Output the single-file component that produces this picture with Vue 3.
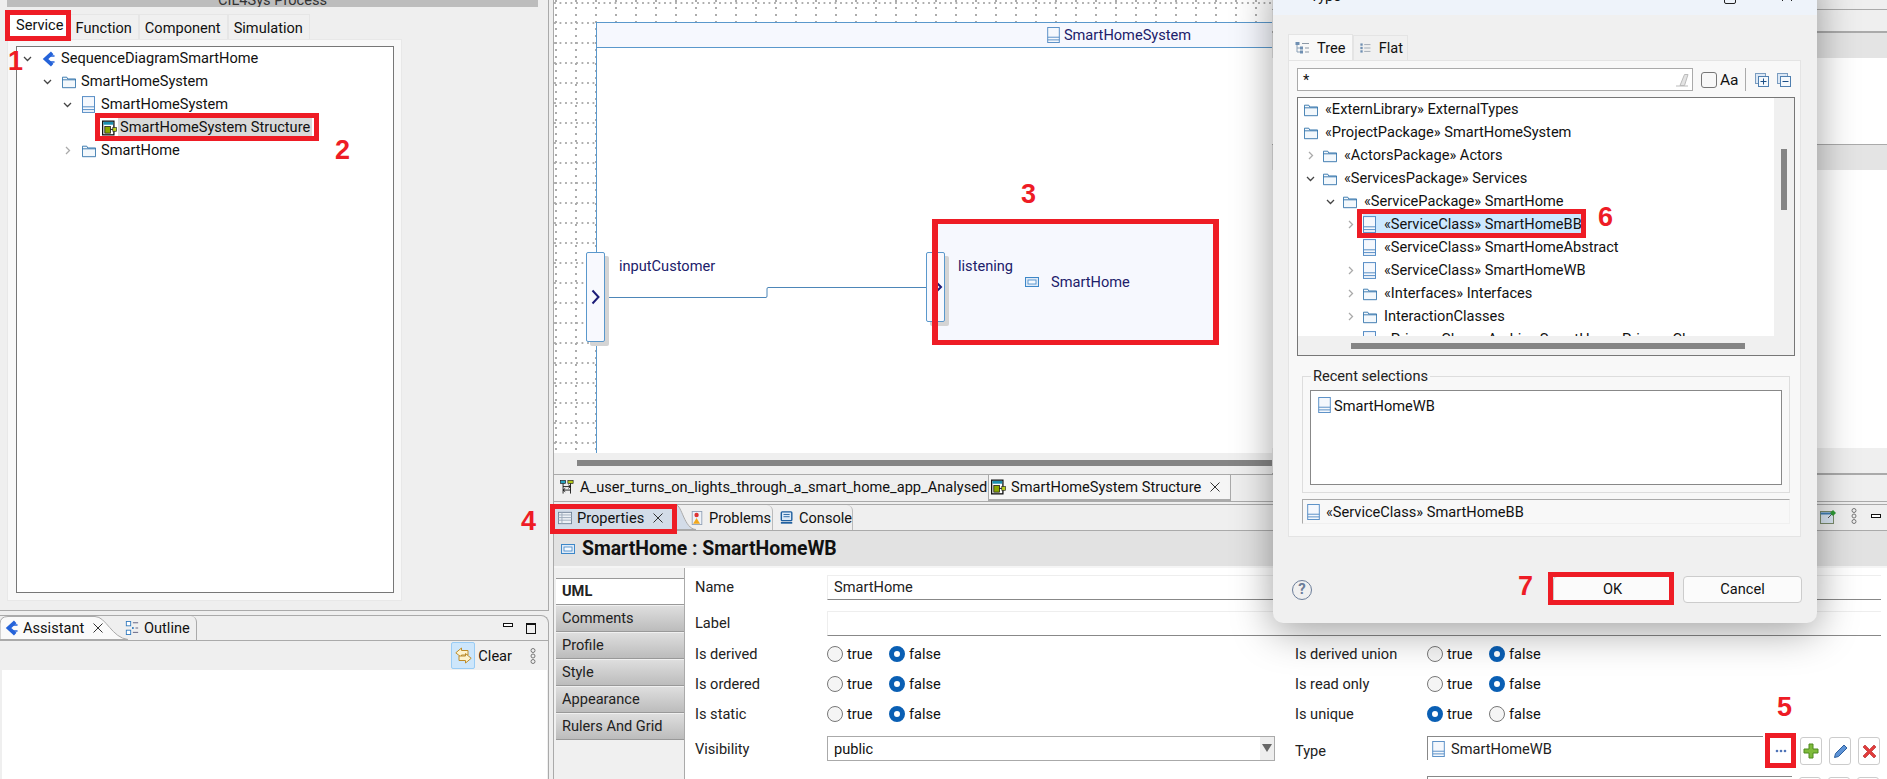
<template>
  <div class="app">
    <svg class="defs" width="0" height="0">
      <symbol id="ic-folder" viewBox="0 0 16 14">
        <path d="M.5 1.5h5l1 2h9v10H.5z" fill="#f3f8fc" stroke="#2b6fa8" />
        <path d="M.5 4.5h15" stroke="#2b6fa8" fill="none" />
      </symbol>
      <symbol id="ic-class" viewBox="0 0 14 18">
        <rect x=".5" y=".5" width="13" height="17" fill="#f5f8fd" stroke="#4c86c2" />
        <path d="M.5 11.5h13M.5 14.5h13" stroke="#4c86c2" fill="none" />
      </symbol>
      <symbol id="ic-struct" viewBox="0 0 16 16">
        <rect x=".7" y=".7" width="12" height="14.6" fill="#fff" stroke="#111" stroke-width="1.4" />
        <rect x="1.5" y="1.5" width="10.5" height="3" fill="#1c8fb0" />
        <rect x="3" y="6.5" width="6" height="7" fill="#8aa800" stroke="#111" stroke-width=".8" />
        <path d="M9 9.5h3" stroke="#111" />
        <rect x="11.5" y="7.5" width="4" height="4" fill="#b9cf1c" stroke="#222" stroke-width=".7" />
      </symbol>
      <symbol id="ic-seq" viewBox="0 0 14 16">
        <path d="M11 1.5L3.800 8l7.200 6.500" fill="none" stroke="#2563d9" stroke-width="4" />
        <path d="M8.500 4.800h5M8.500 11.200h5" stroke="#2563d9" stroke-width="1.6" />
      </symbol>
      <symbol id="ic-part" viewBox="0 0 14 10">
        <rect x=".5" y=".5" width="13" height="9" fill="#dfeaf7" stroke="#3d87c8" />
        <rect x="3" y="3" width="8" height="4" fill="#f6f9fe" stroke="#3d87c8" stroke-width=".8" />
      </symbol>
      <symbol id="ic-seqdiag" viewBox="0 0 16 16">
        <rect x=".5" y=".5" width="6" height="3.5" fill="#28a3c0" stroke="#111" stroke-width=".7" />
        <rect x="9" y=".5" width="6" height="3.5" fill="#b6cc1b" stroke="#111" stroke-width=".7" />
        <path d="M3.500 4v11.500M12 4v11.500M3.500 7.500H12M12 11.500H3.500M9.500 5.500L12 7.500 9.500 9.500M6 9.500l-2.500 2L6 13.500" fill="none" stroke="#111" stroke-width="1" />
      </symbol>
      <symbol id="ic-props" viewBox="0 0 16 16">
        <rect x=".5" y="1.5" width="15" height="13" fill="#edf1f6" stroke="#6d7f94" />
        <path d="M.5 4.500h15M.5 7.500h15M.5 10.500h15M4.500 1.500v13" stroke="#9aa8b8" fill="none" />
      </symbol>
      <symbol id="ic-problems" viewBox="0 0 16 16">
        <rect x="2.5" y=".5" width="11" height="15" fill="#eef2f8" stroke="#8f9fb5" />
        <circle cx="7.500" cy="4.500" r="2.500" fill="#d33" />
        <path d="M7.500 8L3.500 14.500h8z" fill="#f2a81d" />
      </symbol>
      <symbol id="ic-console" viewBox="0 0 16 16">
        <rect x="1.5" y="1" width="12" height="10" rx="1" fill="#dbe9f7" stroke="#1f5f9f" stroke-width="1.6" />
        <path d="M4 4h7M4 6.500h7" stroke="#1f5f9f" />
        <path d="M1 13.500h13" stroke="#1f5f9f" stroke-width="2" />
      </symbol>
      <symbol id="ic-outline" viewBox="0 0 14 16">
        <rect x=".5" y=".5" width="5" height="5" fill="#fff" stroke="#2f78bd" />
        <rect x=".5" y="10.5" width="5" height="5" fill="#fff" stroke="#2f78bd" />
        <rect x="7" y="7" width="2" height="2" fill="#2f78bd" />
        <path d="M8 2h6M11 8h3M8 13h6" stroke="#557" fill="none" />
      </symbol>
      <symbol id="ic-clear" viewBox="0 0 17 17">
        <path d="M6.500 1L.8 5.800l5.700 4.700V8H13V3.500H6.500z" fill="#fdf3cf" stroke="#bd8c2a" />
        <path d="M10.500 6.500l5.700 4.800-5.700 4.700V13.500H4V9h6.500z" fill="#fdf3cf" stroke="#bd8c2a" />
      </symbol>
      <symbol id="ic-tree" viewBox="0 0 14 14">
        <path d="M2 3v8h4M2 7h4" stroke="#8aa0b6" fill="none" />
        <rect x=".5" y="1" width="4" height="3" fill="#6f8fb2" />
        <rect x="5" y="5.5" width="3" height="3" fill="#6f8fb2" />
        <rect x="5" y="9.5" width="3" height="3" fill="#6f8fb2" />
        <path d="M7 2.500h7M10 7h4M10 11h4" stroke="#8d99a6" fill="none" />
      </symbol>
      <symbol id="ic-flat" viewBox="0 0 14 14">
        <rect x=".5" y="1" width="3" height="3" fill="#6f8fb2" />
        <rect x=".5" y="5.5" width="3" height="3" fill="#6f8fb2" />
        <rect x=".5" y="10" width="3" height="3" fill="#6f8fb2" />
        <path d="M5.500 2.500H14M5.500 7H14M5.500 11.500H14" stroke="#8d99a6" fill="none" />
      </symbol>
      <symbol id="ic-expand" viewBox="0 0 14 14">
        <rect x=".5" y=".5" width="10" height="10" fill="#dce8f5" stroke="#7a9cc0" />
        <rect x="3.5" y="3.5" width="10" height="10" fill="#f4f8fc" stroke="#4f7fb0" />
        <path d="M8.500 5.500v6M5.500 8.500h6" stroke="#1c4f86" fill="none" />
      </symbol>
      <symbol id="ic-collapse" viewBox="0 0 14 14">
        <rect x=".5" y=".5" width="10" height="10" fill="#dce8f5" stroke="#7a9cc0" />
        <rect x="3.5" y="3.5" width="10" height="10" fill="#f4f8fc" stroke="#4f7fb0" />
        <path d="M5.500 8.500h6" stroke="#1c4f86" fill="none" />
      </symbol>
      <symbol id="ic-dots" viewBox="0 0 6 16">
        <circle cx="3" cy="2.500" r="2" fill="none" stroke="#777" />
        <circle cx="3" cy="8" r="2" fill="none" stroke="#777" />
        <circle cx="3" cy="13.500" r="2" fill="none" stroke="#777" />
      </symbol>
    </svg>

    <!-- left side -->
    <aside class="left">
      <div class="top-pane">
        <div class="pane-title"><span>CIL4Sys Process</span></div>
        <div class="level-tabs">
          <div v-for="t in levelTabs" :key="t" class="level-tab" :class="{ active: t === 'Service' }">{{ t }}</div>
        </div>
        <div class="level-panel">
          <div class="tree-box">
            <div v-for="(r, i) in serviceTree" :key="i" class="tree-row" :style="{ paddingLeft: 2 + r.depth * 20 + 'px' }">
              <span class="twisty">
                <svg v-if="r.open !== undefined" width="9" height="9" viewBox="0 0 9 9">
                  <path :d="r.open ? 'M1 3l3.500 3.500L8 3' : 'M3 1l3.500 3.500L3 8'" fill="none" :stroke="r.open ? '#444' : '#aaa'" stroke-width="1.3" />
                </svg>
              </span>
              <svg class="ic" :class="'sz-' + r.icon"><use :href="'#ic-' + r.icon" /></svg>
              <span class="tree-label" :class="{ sel: r.sel }">{{ r.label }}</span>
            </div>
          </div>
        </div>
      </div>

      <div class="low-pane">
        <div class="low-tabs">
          <div class="assistant-tab">
            <svg class="tab-curve" width="132" height="24" viewBox="0 0 132 24">
              <path d="M0 24V8Q0 .5 8 .5H95C106 .5 112 22 128 23.500H0z" fill="#fafafa" stroke="#aaa" />
            </svg>
            <svg class="ic tab-ic sz-seq"><use href="#ic-seq" /></svg>
            <span class="tab-text">Assistant</span>
            <svg class="close" width="10" height="10" viewBox="0 0 10 10"><path d="M.5.5l9 9M9.500.5l-9 9" stroke="#333" fill="none" /></svg>
          </div>
          <div class="outline-tab">
            <svg class="ic tab-ic"><use href="#ic-outline" /></svg>
            <span class="tab-text">Outline</span>
          </div>
          <div class="win-btns">
            <span class="win-min"></span>
            <span class="win-max"></span>
          </div>
        </div>
        <div class="low-toolbar">
          <span class="clear-btn"><svg width="17" height="17"><use href="#ic-clear" /></svg></span>
          <span class="clear-text">Clear</span>
          <svg class="dots" width="6" height="16"><use href="#ic-dots" /></svg>
        </div>
        <div class="low-body"></div>
      </div>
    </aside>

    <!-- editor and properties -->
    <main class="right">
      <div class="editor-main">
        <div class="canvas">
          <div class="viewport">
            <div class="frame">
              <div class="frame-head">
                <svg class="frame-ic" width="13" height="16"><use href="#ic-class" /></svg>
                <span>SmartHomeSystem</span>
              </div>
            </div>

            <div class="node">
              <svg class="node-ic" width="14" height="10"><use href="#ic-part" /></svg>
              <span>SmartHome</span>
            </div>
            <svg class="wire" width="330" height="20" viewBox="0 0 330 20">
              <path d="M0 14.500H160Q161 14.500 161 13V6Q161 4.500 162 4.500H330" fill="none" stroke="#4d86b8" />
            </svg>
            <div class="port port-in"><svg width="9" height="16" viewBox="0 0 9 16"><path d="M1.500 1.500L7.500 8l-6 6.500" fill="none" stroke="#1d1d78" stroke-width="2" /></svg></div>
            <div class="port port-out"><svg class="port-arrow" width="8" height="12" viewBox="0 0 8 12"><path d="M1 1l5 5-5 5" fill="none" stroke="#1d1d78" stroke-width="2" /></svg></div>
            <span class="flow-label label-in">inputCustomer</span>
            <span class="flow-label label-out">listening</span>
          </div>
          <div class="hscroll"><div class="hthumb"></div></div>
        </div>
        <div class="palette">
          <div class="pal-a"></div>
          <div class="pal-b"></div>
          <div class="pal-c"></div>
          <div class="pal-d"></div>
          <div class="pal-e"></div>
        </div>
      </div>

      <div class="editor-tabs">
        <div class="ed-tab first">
          <svg class="ic tab-ic"><use href="#ic-seqdiag" /></svg>
          <span>A_user_turns_on_lights_through_a_smart_home_app_Analysed</span>
        </div>
        <div class="ed-tab active">
          <svg class="ic tab-ic sz-struct"><use href="#ic-struct" /></svg>
          <span>SmartHomeSystem Structure</span>
          <svg class="close" width="10" height="10" viewBox="0 0 10 10"><path d="M.5.5l9 9M9.500.5l-9 9" stroke="#333" fill="none" /></svg>
        </div>
      </div>

      <div class="prop-tabs">
        <div class="prop-tab active">
          <svg class="ic tab-ic"><use href="#ic-props" /></svg>
          <span>Properties</span>
          <svg class="close" width="10" height="10" viewBox="0 0 10 10"><path d="M.5.5l9 9M9.500.5l-9 9" stroke="#333" fill="none" /></svg>
          <svg class="prop-curve" width="20" height="25" viewBox="0 0 20 25"><path d="M0 0C6 0 8 24 20 24.500H0z" fill="#d3dce8" stroke="#aaa" /></svg>
        </div>
        <div class="prop-tab problems">
          <svg class="ic tab-ic"><use href="#ic-problems" /></svg>
          <span>Problems</span>
        </div>
        <div class="prop-tab console">
          <svg class="ic tab-ic"><use href="#ic-console" /></svg>
          <span>Console</span>
        </div>
        <div class="prop-tools">
          <svg width="17" height="15" viewBox="0 0 17 15">
            <rect x=".5" y="2.5" width="13" height="12" fill="#dbe8f4" stroke="#7c8c6c" />
            <path d="M.5 4.500h13" stroke="#3f7fb5" stroke-width="2" />
            <path d="M8 9l5-5" stroke="#555" />
            <path d="M10 4l3-3 3 3-3 3z" fill="#2e9a35" />
          </svg>
          <svg width="6" height="16"><use href="#ic-dots" /></svg>
          <span class="win-min"></span>
        </div>
      </div>

      <div class="prop-head">
        <svg width="14" height="10"><use href="#ic-part" /></svg>
        <span>SmartHome : SmartHomeWB</span>
      </div>

      <div class="prop-body">
        <div class="side-tabs">
          <div v-for="s in sideTabs" :key="s" class="side-tab" :class="{ active: s === 'UML' }">{{ s }}</div>
        </div>
        <div class="form">
          <div class="form-line">
            <label>Name</label>
            <div class="text-input">SmartHome</div>
          </div>
          <div class="form-line">
            <label>Label</label>
            <div class="text-input"></div>
          </div>
          <div class="form-cols">
            <div class="form-col">
              <div v-for="r in leftRadios" :key="r.label" class="radio-line">
                <label>{{ r.label }}</label>
                <span class="radio" :class="{ on: r.value }"></span><span class="radio-text">true</span>
                <span class="radio" :class="{ on: !r.value }"></span><span class="radio-text">false</span>
              </div>
              <div class="select-line">
                <label>Visibility</label>
                <div class="select"><span>public</span><i class="select-arrow"></i></div>
              </div>
            </div>
            <div class="form-col">
              <div v-for="r in rightRadios" :key="r.label" class="radio-line">
                <label>{{ r.label }}</label>
                <span class="radio" :class="{ on: r.value }"></span><span class="radio-text">true</span>
                <span class="radio" :class="{ on: !r.value }"></span><span class="radio-text">false</span>
              </div>
              <div class="type-line">
                <label>Type</label>
                <div class="type-field">
                  <svg width="13" height="16"><use href="#ic-class" /></svg>
                  <span>SmartHomeWB</span>
                </div>
                <button class="mini more">
                  <svg width="12" height="4" viewBox="0 0 12 4"><circle cx="2" cy="2" r="1.300" fill="#4f74b8" /><circle cx="6" cy="2" r="1.300" fill="#4f74b8" /><circle cx="10" cy="2" r="1.300" fill="#4f74b8" /></svg>
                </button>
                <button class="mini">
                  <svg width="16" height="16" viewBox="0 0 16 16"><path d="M6 1h4v5h5v4h-5v5H6v-5H1V6h5z" fill="#7fbb3c" stroke="#4e8a1f" /></svg>
                </button>
                <button class="mini">
                  <svg width="15" height="15" viewBox="0 0 15 15"><path d="M11 1l3 3-8.500 8.500L1.500 13.500l1-4z" fill="#5d93d6" stroke="#2e5f9e" /></svg>
                </button>
                <button class="mini">
                  <svg width="15" height="15" viewBox="0 0 15 15"><path d="M1 3l2-2 4.500 4.500L12 1l2 2-4.500 4.500L14 12l-2 2-4.500-4.500L3 14l-2-2 4.500-4.500z" fill="#e23b3b" stroke="#b02020" stroke-width=".6" /></svg>
                </button>
              </div>
              <div class="type-line next">
                <div class="type-field wide"></div>
                <button class="mini"></button>
                <button class="mini"></button>
                <button class="mini"></button>
              </div>
            </div>
          </div>
        </div>
      </div>
    </main>

    <!-- selection dialog -->
    <section class="dialog">
      <header class="dlg-title">
        <svg width="10" height="12" viewBox="0 0 10 12"><path d="M1 2l8 4-8 4z" fill="#3f9a4a" /></svg>
        <span>Type</span>
        <i class="dlg-max"></i>
        <svg class="dlg-x" width="12" height="12" viewBox="0 0 12 12"><path d="M1 1l10 10M11 1L1 11" stroke="#222" fill="none" /></svg>
      </header>
      <div class="dlg-tabs">
        <div class="dlg-tab active"><svg width="14" height="14"><use href="#ic-tree" /></svg><span>Tree</span></div>
        <div class="dlg-tab"><svg width="14" height="14"><use href="#ic-flat" /></svg><span>Flat</span></div>
      </div>
      <div class="dlg-panel">
        <div class="filter">
          <div class="filter-input">
            <span>*</span>
            <svg width="14" height="14" viewBox="0 0 14 14"><path d="M5 12.500L9.500 1.500h3.500L9.500 12.500zM1 13h12" fill="#e3e3e3" stroke="#bbb" /></svg>
          </div>
          <span class="check"></span>
          <span class="aa">Aa</span>
          <i class="vsep"></i>
          <svg width="14" height="14"><use href="#ic-expand" /></svg>
          <svg class="collapse" width="14" height="14"><use href="#ic-collapse" /></svg>
        </div>
        <div class="type-tree">
          <div class="type-rows">
            <div v-for="r in typeTree" :key="r.label" class="tree-row" :style="{ paddingLeft: typePad(r.depth) + 'px' }">
              <span v-if="r.depth > 0" class="twisty">
                <svg v-if="r.open !== undefined" width="9" height="9" viewBox="0 0 9 9">
                  <path :d="r.open ? 'M1 3l3.500 3.500L8 3' : 'M3 1l3.500 3.500L3 8'" fill="none" :stroke="r.open ? '#444' : '#aaa'" stroke-width="1.3" />
                </svg>
              </span>
              <span class="type-item" :class="{ sel: r.sel }">
                <svg class="ic" :class="'sz-' + r.icon"><use :href="'#ic-' + r.icon" /></svg>
                <span class="type-text">{{ r.label }}</span>
              </span>
            </div>
          </div>
          <div class="vbar"><i></i></div>
          <div class="hbar"><i></i></div>
        </div>
        <fieldset class="recent">
          <legend>Recent selections</legend>
          <div class="recent-list">
            <svg width="13" height="16"><use href="#ic-class" /></svg>
            <span>SmartHomeWB</span>
          </div>
        </fieldset>
        <div class="status">
          <svg width="13" height="16"><use href="#ic-class" /></svg>
          <span>«ServiceClass» SmartHomeBB</span>
        </div>
      </div>
      <footer class="dlg-foot">
        <span class="help">?</span>
        <button class="dlg-btn">OK</button>
        <button class="dlg-btn">Cancel</button>
      </footer>
    </section>

    <!-- tutorial annotations drawn over the screenshot -->
    <div v-for="b in marks" :key="b" class="mark" :class="b"></div>
    <span v-for="n in steps" :key="n" class="step" :class="'step-' + n">{{ n }}</span>
  </div>
</template>

<script setup>
const levelTabs = ['Service', 'Function', 'Component', 'Simulation']

const serviceTree = [
  { depth: 0, open: true, icon: 'seq', label: 'SequenceDiagramSmartHome' },
  { depth: 1, open: true, icon: 'folder', label: 'SmartHomeSystem' },
  { depth: 2, open: true, icon: 'class', label: 'SmartHomeSystem' },
  { depth: 3, icon: 'struct', label: 'SmartHomeSystem Structure', sel: true },
  { depth: 2, open: false, icon: 'folder', label: 'SmartHome' },
]

const typeTree = [
  { depth: 0, icon: 'folder', label: '«ExternLibrary» ExternalTypes' },
  { depth: 0, icon: 'folder', label: '«ProjectPackage» SmartHomeSystem' },
  { depth: 1, open: false, icon: 'folder', label: '«ActorsPackage» Actors' },
  { depth: 1, open: true, icon: 'folder', label: '«ServicesPackage» Services' },
  { depth: 2, open: true, icon: 'folder', label: '«ServicePackage» SmartHome' },
  { depth: 3, open: false, icon: 'class', label: '«ServiceClass» SmartHomeBB', sel: true },
  { depth: 3, icon: 'class', label: '«ServiceClass» SmartHomeAbstract' },
  { depth: 3, open: false, icon: 'class', label: '«ServiceClass» SmartHomeWB' },
  { depth: 3, open: false, icon: 'folder', label: '«Interfaces» Interfaces' },
  { depth: 3, open: false, icon: 'folder', label: 'InteractionClasses' },
  { depth: 3, icon: 'class', label: '«PrimaryClass» Archive SmartHome PrimaryClass' },
]

const typePad = (depth) => (depth === 0 ? 6 : depth * 20 - 16)

const sideTabs = ['UML', 'Comments', 'Profile', 'Style', 'Appearance', 'Rulers And Grid']

const leftRadios = [
  { label: 'Is derived', value: false },
  { label: 'Is ordered', value: false },
  { label: 'Is static', value: false },
]

const rightRadios = [
  { label: 'Is derived union', value: false },
  { label: 'Is read only', value: false },
  { label: 'Is unique', value: true },
]

const marks = ['m-service', 'm-struct', 'm-node', 'm-props', 'm-more', 'm-bb', 'm-ok']
const steps = [1, 2, 3, 4, 5, 6, 7]
</script>

<style>
html,
body {
  margin: 0;
  background: #efefef;
}
</style>

<style scoped>
.app {
  position: relative;
  display: flex;
  width: 1887px;
  height: 779px;
  overflow: hidden;
  background: #efefef;
  color: #111;
  font-family: Roboto, 'Liberation Sans', sans-serif;
  font-size: 14.6px;
}

.defs {
  position: absolute;
}

.left {
  width: 549px;
  flex: none;
}

.top-pane {
  height: 611px;
  box-sizing: border-box;
  border-right: 1px solid #aaa;
  border-bottom: 1px solid #aaa;
  padding-left: 7px;
}

.pane-title {
  width: 531px;
  height: 7px;
  overflow: hidden;
  background: #bdbdbd;
  text-align: center;
  line-height: 0;
  color: #333;
}

.level-tabs {
  display: flex;
  align-items: flex-end;
  height: 32px;
}

.level-tab {
  height: 25px;
  box-sizing: border-box;
  padding: 3px 6px 0 5px;
  line-height: 20px;
  background: #f0f0f0;
  border: 1px solid #e6e6e6;
  border-bottom: none;
}

.level-tab.active {
  height: 27px;
  padding: 2px 5px 0 8px;
  background: #fff;
  border-color: #fff;
}

.level-panel {
  width: 395px;
  height: 562px;
  box-sizing: border-box;
  padding: 6px 7px 8px 8px;
  background: #f8f8f8;
  border: 1px solid #e8e8e8;
}

.tree-box {
  height: 547px;
  box-sizing: border-box;
  background: #fff;
  border: 1px solid #777;
}

.tree-row {
  display: flex;
  align-items: center;
  height: 23px;
  white-space: nowrap;
}

.twisty {
  display: flex;
  justify-content: center;
  align-items: center;
  flex: none;
  width: 16px;
  margin-right: 7px;
}

.ic {
  flex: none;
  width: 14px;
  height: 14px;
  margin-right: 5px;
}

.sz-class {
  width: 13px;
  height: 17px;
  margin-right: 6px;
}

.sz-struct {
  width: 15px;
  height: 16px;
  margin-right: 3px;
}

.sz-seq {
  width: 13px;
  height: 16px;
  margin-right: 6px;
}

.tree-label {
  padding: 0 2px 1px;
  margin: -1px 0 0 -2px;
}

.tree-label.sel {
  background: #d9d9d9;
}

.low-pane {
  position: relative;
  height: 164px;
  box-sizing: border-box;
  margin-top: 4px;
  border-right: 1px solid #aaa;
  border-top: 1px solid #aaa;
  border-radius: 0 8px 0 0;
}

.low-tabs {
  position: relative;
  display: flex;
  align-items: center;
  height: 24px;
  border-bottom: 1px solid #aaa;
}

.assistant-tab {
  position: relative;
  display: flex;
  align-items: center;
  width: 125px;
  height: 24px;
  padding-left: 5px;
  box-sizing: border-box;
}

.tab-curve {
  position: absolute;
  left: 0;
  top: 0;
}

.assistant-tab > *:not(.tab-curve) {
  position: relative;
}

.tab-ic {
  margin-right: 5px;
}

.close {
  margin-left: 9px;
}

.outline-tab {
  display: flex;
  align-items: center;
  width: 72px;
  height: 24px;
  box-sizing: border-box;
  border-right: 1px solid #aaa;
  border-radius: 0 6px 0 0;
}

.win-btns {
  display: flex;
  gap: 13px;
  align-items: flex-start;
  margin-left: auto;
  margin-right: 12px;
}

.win-min {
  width: 8px;
  height: 2px;
  border: 1px solid #111;
  background: #fff;
  display: block;
}

.win-max {
  width: 8px;
  height: 8px;
  border: 1px solid #111;
  border-top-width: 2px;
  display: block;
}

.low-toolbar {
  display: flex;
  align-items: center;
  height: 29px;
  padding-right: 12px;
  justify-content: flex-end;
}

.clear-btn {
  display: flex;
  align-items: center;
  justify-content: center;
  width: 22px;
  height: 25px;
  background: #cde6fb;
  border: 1px solid #99ccf5;
  border-radius: 2px;
  margin-right: 3px;
}

.clear-text {
  margin-right: 18px;
}

.low-body {
  height: 110px;
  margin: 0 1px 0 2px;
  background: #fff;
}

/* right column */
.right {
  flex: 1;
  min-width: 0;
  margin-left: 4px;
  border-left: 1px solid #aaa;
  display: flex;
  flex-direction: column;
}

.editor-main {
  display: flex;
  height: 474px;
  flex: none;
}

.canvas {
  width: 718px;
  flex: none;
}

.viewport {
  position: relative;
  height: 453px;
  overflow: hidden;
  background-color: #fff;
  background-image:
    radial-gradient(circle at 1px 1px, #aaa .7px, transparent 1px),
    radial-gradient(circle at 1px 1px, #aaa .7px, transparent 1px);
  background-size: 5.5px 20px, 20px 7px;
  background-position: 0 2px, 1px 0;
}

.frame {
  position: absolute;
  left: 42px;
  top: 22px;
  width: 1042px;
  height: 440px;
  background: #fff;
  border: 1px solid #5a98cc;
}

.frame-head {
  display: flex;
  justify-content: center;
  align-items: center;
  gap: 4px;
  height: 24px;
  background: #f6f8fe;
  border-bottom: 1px solid #5a98cc;
  color: #20206a;
}

.frame-ic {
  margin-left: 2px;
}

.node {
  position: absolute;
  left: 383px;
  top: 224px;
  display: flex;
  align-items: center;
  width: 277px;
  height: 116px;
  box-sizing: border-box;
  padding: 0 0 0 88px;
  background: #f6f8fe;
  color: #20206a;
}

.node-ic {
  margin-right: 12px;
}

.wire {
  position: absolute;
  left: 52px;
  top: 283px;
}

.port {
  position: absolute;
  width: 19px;
  box-sizing: border-box;
  background: #f8f9fe;
  border: 1px solid #5a98cc;
  border-radius: 2px;
  box-shadow: 4px 4px 0 #d4d4d4;
  display: flex;
  align-items: center;
}

.port-in {
  left: 32px;
  top: 252px;
  height: 90px;
  justify-content: center;
}

.port-out {
  left: 372px;
  top: 252px;
  height: 70px;
  overflow: visible;
}

.port-arrow {
  position: absolute;
  left: 8px;
  top: 28px;
}

.flow-label {
  position: absolute;
  top: 257px;
  color: #20206a;
}

.label-in {
  left: 65px;
}

.label-out {
  left: 404px;
}

.hscroll {
  height: 21px;
  padding: 7px 0 0 23px;
  box-sizing: border-box;
}

.hthumb {
  height: 6px;
  background: #858585;
}

.palette {
  flex: 1;
  border-bottom: 1px solid #aaa;
}

.pal-a {
  height: 9px;
  border-bottom: 1px solid #aaa;
}

.pal-b {
  height: 21px;
  border-bottom: 2px solid #aaa;
}

.pal-c {
  height: 25px;
  background: #e4e4e4;
}

.pal-d {
  height: 86px;
  background: #fff;
  border-bottom: 1px solid #aaa;
}

.pal-e {
  height: 303px;
  background: linear-gradient(#e4e4e4 25px, #fff 25px);
}

.editor-tabs {
  display: flex;
  align-items: flex-start;
  height: 28px;
  box-sizing: border-box;
  flex: none;
  padding-left: 4px;
  border-top: 1px solid #aaa;
  border-bottom: 1px solid #aaa;
}

.ed-tab {
  display: flex;
  align-items: center;
  height: 24px;
  white-space: nowrap;
}

.ed-tab.first {
  width: 430px;
  letter-spacing: .02px;
}

.ed-tab.first .tab-ic {
  margin-left: 2px;
  margin-right: 6px;
}

.ed-tab.active {
  height: 24px;
  padding: 0 10px 0 2px;
  background: #f5f5f5;
  border-bottom: 2px solid #aaa;
  border-left: 1px solid #aaa;
  border-right: 1px solid #aaa;
}

.prop-tabs {
  position: relative;
  display: flex;
  align-items: center;
  height: 27px;
  box-sizing: border-box;
  margin-top: 2px;
  flex: none;
  border-top: 1px solid #aaa;
  border-bottom: 1px solid #aaa;
}

.prop-tab {
  display: flex;
  align-items: center;
  height: 25px;
  white-space: nowrap;
}

.prop-tab.active {
  position: relative;
  width: 122px;
  padding-left: 4px;
  box-sizing: border-box;
  background: #d3dce8;
}

.prop-curve {
  position: absolute;
  left: 122px;
  top: 0;
}

.prop-tab.problems {
  margin-left: 14px;
  width: 82px;
  border-right: 1px solid #bbb;
  border-radius: 0 6px 0 0;
}

.prop-tab.console {
  margin-left: 7px;
  width: 72px;
  border-right: 1px solid #bbb;
  border-radius: 0 6px 0 0;
}

.prop-tools {
  position: absolute;
  left: 1266px;
  top: 3px;
  display: flex;
  align-items: center;
  gap: 14px;
}

.prop-head {
  display: flex;
  align-items: center;
  gap: 7px;
  height: 35px;
  flex: none;
  padding-left: 7px;
  background: #e2e2e2;
  font-weight: 700;
  font-size: 19.4px;
  border-bottom: 2px solid #f5f5f5;
}

.prop-body {
  flex: 1;
  min-height: 0;
  display: flex;
  background: #fff;
}

.side-tabs {
  width: 131px;
  flex: none;
  box-sizing: border-box;
  padding: 10px 0 0 2px;
  background: #f0f0f0;
  border-right: 1px solid #aaa;
}

.side-tab {
  height: 26px;
  margin-bottom: 1px;
  box-sizing: border-box;
  padding-left: 6px;
  line-height: 25px;
  color: #222;
  background: linear-gradient(#dedede, #bcbcbc);
  border-bottom: 1px solid #999;
}

.side-tab.active {
  background: #fff;
  border-top: 1px solid #999;
  border-bottom: 1px solid #999;
  height: 27px;
  font-weight: 700;
}

.form {
  flex: 1;
  padding: 7px 6px 0 10px;
  min-width: 0;
}

.form-line {
  display: flex;
  align-items: center;
  height: 25px;
  margin-bottom: 11px;
}

.form-line label {
  margin-top: -2px;
}

label {
  width: 132px;
  flex: none;
  color: #222;
}

.text-input {
  flex: 1;
  height: 25px;
  box-sizing: border-box;
  padding-left: 6px;
  line-height: 22px;
  border-top: 1px solid #eee;
  border-left: 1px solid #eee;
  border-bottom: 1px solid #888;
  color: #222;
}

.form-cols {
  display: flex;
  gap: 20px;
  margin-top: -8px;
}

.form-col {
  width: 580px;
  flex: none;
}

.radio-line {
  display: flex;
  align-items: center;
  height: 30px;
}

.radio {
  width: 16px;
  height: 16px;
  box-sizing: border-box;
  border: 1px solid #777;
  border-radius: 50%;
  background: #f5f5f5;
  flex: none;
}

.radio.on {
  border: 5px solid #0a5fb4;
  background: #fff;
}

.radio-text {
  width: 42px;
  margin-left: 4px;
}

.select-line {
  display: flex;
  align-items: center;
  margin-top: 7px;
}

.select {
  flex: 1;
  display: flex;
  align-items: center;
  justify-content: space-between;
  height: 25px;
  box-sizing: border-box;
  padding-left: 6px;
  border: 1px solid #aaa;
}

.select-arrow {
  width: 14px;
  height: 23px;
  background: #eee;
  position: relative;
}

.select-arrow::after {
  content: '';
  position: absolute;
  left: 2px;
  top: 7px;
  border: 5px solid transparent;
  border-top: 8px solid #666;
}

.type-line {
  display: flex;
  align-items: flex-start;
  margin-top: 7px;
  width: 586px;
}

.type-line label {
  padding-top: 6px;
}

.type-field {
  display: flex;
  align-items: center;
  gap: 6px;
  width: 336px;
  height: 24px;
  box-sizing: border-box;
  padding-left: 4px;
  flex: none;
  border-top: 1px solid #888;
  border-left: 1px solid #888;
  color: #222;
}

.mini {
  width: 22px;
  height: 28px;
  flex: none;
  margin: 1px 0 0 7px;
  padding: 0;
  display: flex;
  align-items: center;
  justify-content: center;
  background: #fff;
  border: 1px solid #ccc;
  border-radius: 3px;
}

.mini.more {
  border: none;
  margin-right: 1px;
}

.type-line.next {
  margin-top: 11px;
  margin-left: 132px;
  width: 466px;
}

.type-field.wide {
  width: 365px;
}

/* dialog */
.dialog {
  position: absolute;
  left: 1273px;
  top: -28px;
  width: 544px;
  height: 651px;
  box-sizing: border-box;
  background: #f0f0f0;
  border-radius: 10px;
  box-shadow: 0 8px 40px rgba(0, 0, 0, .38);
}

.dlg-title {
  position: relative;
  display: flex;
  align-items: center;
  gap: 10px;
  height: 43px;
  padding: 5px 0 0 17px;
  box-sizing: border-box;
  background: #eef3fa;
  border-radius: 10px 10px 0 0;
}

.dlg-max {
  position: absolute;
  left: 451px;
  top: 20px;
  width: 10px;
  height: 10px;
  border: 1px solid #222;
  border-radius: 2px;
}

.dlg-x {
  position: absolute;
  left: 508px;
  top: 18px;
}

.dlg-tabs {
  display: flex;
  align-items: flex-end;
  margin: 19px 0 0 15px;
  height: 26px;
}

.dlg-tab {
  display: flex;
  align-items: center;
  gap: 8px;
  height: 25px;
  padding: 0 4px 0 6px;
  box-sizing: border-box;
  border: 1px solid #e4e4e4;
  border-bottom: none;
  background: #f0f0f0;
}

.dlg-tab.active {
  height: 26px;
  width: 65px;
  background: #f8f8f8;
}

.dlg-tab:not(.active) {
  width: 55px;
}

.dlg-panel {
  width: 513px;
  height: 477px;
  margin-left: 15px;
  box-sizing: border-box;
  padding: 7px 7px 0 8px;
  background: #f8f8f8;
  border: 1px solid #e4e4e4;
}

.filter {
  display: flex;
  align-items: center;
  height: 23px;
}

.filter-input {
  display: flex;
  align-items: center;
  justify-content: space-between;
  width: 396px;
  height: 23px;
  box-sizing: border-box;
  padding: 0 3px 0 5px;
  background: #fff;
  border: 1px solid #aaa;
}

.check {
  width: 16px;
  height: 16px;
  box-sizing: border-box;
  margin-left: 8px;
  border: 1px solid #777;
  border-radius: 3px;
  background: #f8f8f8;
}

.aa {
  margin-left: 3px;
  font-size: 15.5px;
}

.vsep {
  width: 1px;
  height: 23px;
  margin: 0 9px 0 6px;
  background: #aaa;
}

.collapse {
  margin-left: 8px;
}

.type-tree {
  position: relative;
  width: 498px;
  height: 259px;
  box-sizing: border-box;
  margin-top: 6px;
  background: #f0f0f0;
  border: 1px solid #777;
}

.type-rows {
  width: 476px;
  height: 238px;
  overflow: hidden;
  background: #fff;
}

.type-rows .twisty {
  width: 16px;
  margin-right: 5px;
}

.type-item {
  display: flex;
  align-items: center;
  height: 23px;
}

.type-text {
  margin-top: -2px;
}

.type-item .ic {
  margin-right: 7px;
}

.type-item .sz-class {
  margin-right: 8px;
}

.type-item.sel {
  background: #cce8ff;
}

.vbar {
  position: absolute;
  right: 7px;
  top: 51px;
}

.vbar i {
  display: block;
  width: 6px;
  height: 61px;
  background: #858585;
}

.hbar {
  position: absolute;
  left: 53px;
  top: 245px;
}

.hbar i {
  display: block;
  width: 394px;
  height: 6px;
  background: #858585;
}

.recent {
  width: 488px;
  height: 124px;
  box-sizing: border-box;
  margin: 13px 0 0 5px;
  padding: 0 7px;
  border: 1px solid #ddd;
}

.recent legend {
  padding: 0 2px;
  margin-left: 1px;
  color: #222;
  line-height: 15px;
}

.recent-list {
  display: flex;
  align-items: flex-start;
  gap: 3px;
  height: 95px;
  box-sizing: border-box;
  padding: 6px 0 0 7px;
  margin-top: 6px;
  background: #fff;
  border: 1px solid #888;
}

.status {
  display: flex;
  align-items: center;
  gap: 6px;
  width: 488px;
  height: 25px;
  box-sizing: border-box;
  margin: 6px 0 0 5px;
  padding-left: 4px;
  border-top: 1px solid #aaa;
  border-left: 1px solid #aaa;
  border-right: 1px solid #f0f0f0;
  border-bottom: 1px solid #f0f0f0;
}

.dlg-foot {
  display: flex;
  align-items: center;
  gap: 11px;
  margin-top: 39px;
  padding: 0 15px 0 19px;
}

.help {
  width: 20px;
  height: 20px;
  box-sizing: border-box;
  margin-right: auto;
  text-align: center;
  line-height: 17px;
  font-size: 15px;
  font-weight: 700;
  color: #6b7d99;
  border: 1.5px solid #6b7d99;
  border-radius: 50%;
}

.dlg-btn {
  width: 119px;
  height: 27px;
  padding: 0 0 2px;
  background: #fbfbfb;
  border: 1px solid #ccc;
  border-radius: 4px;
  font: inherit;
  color: #111;
}

/* annotations */
.mark {
  position: absolute;
  box-sizing: border-box;
  border: 5px solid #ee1c25;
}

.m-service { left: 5px; top: 10px; width: 66px; height: 31px; }
.m-struct { left: 95px; top: 113px; width: 224px; height: 28px; }
.m-node { left: 932px; top: 219px; width: 287px; height: 126px; border-width: 5px 6px; }
.m-props { left: 550px; top: 504px; width: 127px; height: 30px; }
.m-more { left: 1765px; top: 733px; width: 31px; height: 35px; }
.m-bb { left: 1357px; top: 209px; width: 229px; height: 29px; }
.m-ok { left: 1548px; top: 572px; width: 126px; height: 33px; }

.step {
  position: absolute;
  color: #ee1c25;
  font-family: 'Liberation Sans', sans-serif;
  font-weight: 700;
  font-size: 27px;
  line-height: 28px;
}

.step-1 { left: 8px; top: 47px; }
.step-2 { left: 335px; top: 136px; }
.step-3 { left: 1021px; top: 180px; }
.step-4 { left: 521px; top: 507px; }
.step-5 { left: 1777px; top: 693px; }
.step-6 { left: 1598px; top: 203px; }
.step-7 { left: 1518px; top: 572px; }
</style>
